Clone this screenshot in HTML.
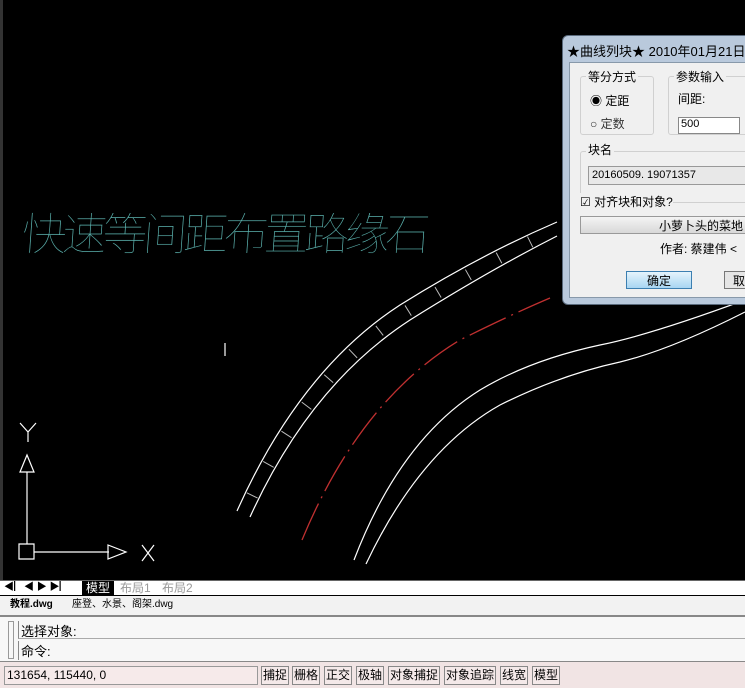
<!DOCTYPE html>
<html><head><meta charset="utf-8"><style>
*{margin:0;padding:0;box-sizing:border-box}
body{width:745px;height:688px;background:#000;position:relative;overflow:hidden;font-family:"Liberation Sans","Noto Sans CJK SC",sans-serif}
.abs{position:absolute}
.cjk{font-family:"Liberation Sans","Noto Sans CJK SC",sans-serif}
.dlg{position:absolute;left:562px;top:35px;width:200px;height:270px;background:#b9c9dc;border:1px solid #5a6a7c;border-radius:6px}
.inner{position:absolute;left:6px;top:26px;right:0;bottom:6px;background:#f0f0f0;border:1px solid #8899aa}
.grp{position:absolute;border:1px solid #d0d0d0;border-radius:3px}
.lg{position:absolute;background:#f0f0f0;font-size:12px;padding:0 2px;color:#000}
.t12{font-size:12px;color:#000;position:absolute;white-space:nowrap}
.sb{position:absolute;top:666px;height:19px;font-size:12px;line-height:17px;padding:0 1px;border:1px solid #888;background:#f4e9e9;color:#000}
</style></head><body>
<div class="abs" style="left:0;top:0;width:3px;height:580px;background:#333"></div>
<div class="abs cjk" style="left:22px;top:198px;font-size:45px;letter-spacing:-4.6px;color:#5cb4b0;font-weight:100;transform:skewX(-4deg);-webkit-text-stroke:0.6px #000;white-space:nowrap">快速等间距布置路缘石</div>
<svg class="abs" style="left:0;top:0" width="745" height="580">
<path d="M243.5 514 Q305 377.5 405 312.5 Q485 262.5 557 229" fill="none" stroke="#bbb" stroke-width="12" stroke-dasharray="1 34" stroke-dashoffset="-20"/>
<g fill="none" stroke="#fff" stroke-width="1.2">
<path d="M237 511 Q300 370 400 305 Q480 255 557 222"/>
<path d="M250 517 Q310 385 410 320 Q490 270 557 236"/>
<path d="M354 560 Q400 440 480 390 Q530 360 600 345 Q650 335 745 300"/>
<path d="M366 564 Q420 450 500 405 Q560 375 620 362 Q670 350 745 312"/>
<path d="M225 343 v13"/>
<path d="M27 472 v72"/>
<path d="M20 472 l7-17 l7 17 z"/>
<path d="M19 544 h15 v15 h-15 z M34 552 h75 M108 545 l18 7 l-18 7 z"/>
<path d="M142 545 l12 16 M154 545 l-12 16"/>
<path d="M20 423 l8 9 l8-9 M28 432 v10"/>
</g>
<path d="M302 540 Q360 400 460 340 Q510 315 550 298" fill="none" stroke="#c03030" stroke-width="1.3" stroke-dasharray="40 6 2 6"/>
</svg>
<div class="dlg">
<div class="t12 cjk" style="left:4px;top:5px;font-size:13px">★曲线列块★ 2010年01月21日</div>
<div class="inner">
 <div class="grp" style="left:10px;top:13px;width:74px;height:59px"></div><div class="lg" style="left:16px;top:5px">等分方式</div>
 <div class="t12" style="left:20px;top:29px">◉ 定距</div><div class="t12" style="left:20px;top:52px;color:#333">○ 定数</div>
 <div class="grp" style="left:98px;top:13px;width:100px;height:59px"></div><div class="lg" style="left:104px;top:5px">参数输入</div>
 <div class="t12" style="left:108px;top:27px">间距:</div>
 <div class="abs" style="left:108px;top:54px;width:62px;height:17px;border:1px solid #888;background:#fff;font-size:11px;padding-left:2px">500</div>
 <div class="grp" style="left:10px;top:88px;width:190px;height:52px"></div><div class="lg" style="left:16px;top:78px">块名</div>
 <div class="abs" style="left:18px;top:103px;width:170px;height:19px;border:1px solid #999;background:#e8e8e8;font-size:11px;padding:2px 3px">20160509. 19071357 <span style="position:absolute;left:160px">▼</span></div>
 <div class="t12" style="left:10px;top:130px;background:#f0f0f0">☑ 对齐块和对象?</div>
 <div class="abs" style="left:10px;top:153px;width:190px;height:18px;border:1px solid #999;background:linear-gradient(#f4f4f4,#d8d8d8);font-size:12px;padding-left:78px;white-space:nowrap">小萝卜头的菜地</div>
 <div class="t12" style="left:90px;top:177px">作者: 蔡建伟 &lt;</div>
 <div class="abs" style="left:56px;top:208px;width:66px;height:18px;border:1px solid #3c7fb1;background:linear-gradient(#e5f4fc,#a8d5f2);font-size:12px;text-align:center">确定</div>
 <div class="abs" style="left:154px;top:208px;width:40px;height:18px;border:1px solid #777;background:#e5e5e5;font-size:12px;padding-left:8px">取</div>
</div></div>
<div class="abs" style="left:0;top:580px;width:745px;height:15px;background:#fff;font-size:12px;line-height:14px;border-top:1px solid #666">
 <span style="position:absolute;left:4px;font-size:10px">◀▏◀ ▶ ▶▏</span>
 <span style="position:absolute;left:82px;background:#000;color:#fff;padding:0 4px">模型</span>
 <span style="position:absolute;left:120px;color:#999">布局1</span><span style="position:absolute;left:162px;color:#999">布局2</span></div>
<div class="abs" style="left:0;top:595px;width:745px;height:22px;background:#f2f2f2;border-top:1px solid #000;border-bottom:2px solid #888;font-size:10px;line-height:18px">
 <span style="position:absolute;left:10px;font-weight:bold">教程.dwg</span><span style="position:absolute;left:72px">座登、水景、阁架.dwg</span></div>
<div class="abs" style="left:0;top:617px;width:745px;height:45px;background:#f7f7f7;border-bottom:1px solid #888">
 <div class="abs" style="left:8px;top:4px;width:6px;height:38px;border:1px solid #999"></div>
 <div class="abs" style="left:18px;top:4px;width:727px;height:18px;border-left:1px solid #888;border-bottom:1px solid #aaa;font-size:13px;padding-left:2px">选择对象:</div>
 <div class="abs" style="left:18px;top:24px;font-size:13px;border-left:1px solid #888;padding-left:2px">命令:</div></div>
<div class="abs" style="left:0;top:662px;width:745px;height:26px;background:#f1e4e4"></div>
<div class="abs" style="left:4px;top:666px;width:254px;height:19px;border:1px solid #999;font-size:12px;line-height:17px;padding-left:2px;background:#f6eaea">131654, 115440, 0</div>
<div class="sb" style="left:261px">捕捉</div><div class="sb" style="left:292px">栅格</div><div class="sb" style="left:324px">正交</div><div class="sb" style="left:356px">极轴</div><div class="sb" style="left:388px">对象捕捉</div><div class="sb" style="left:444px">对象追踪</div><div class="sb" style="left:500px">线宽</div><div class="sb" style="left:532px">模型</div>
</body></html>
